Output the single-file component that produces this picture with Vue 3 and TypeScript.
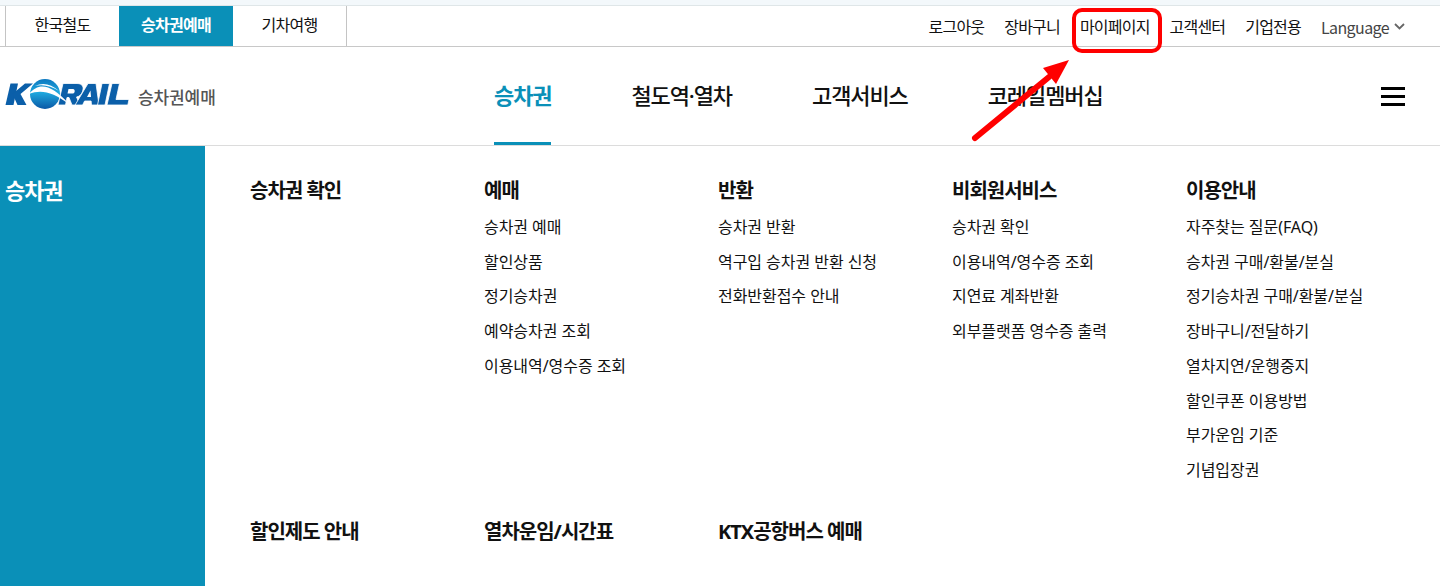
<script setup lang="ts">
// Site header with the open ticket menu
interface MenuColumn {
  title: string
  links: string[]
}

const topTabs = ['한국철도', '승차권예매', '기차여행']
const utilLinks = ['로그아웃', '장바구니', '마이페이지', '고객센터', '기업전용']
const mainNav = ['승차권', '철도역·열차', '고객서비스', '코레일멤버십']

const columns: MenuColumn[] = [
  { title: '승차권 확인', links: [] },
  { title: '예매', links: ['승차권 예매', '할인상품', '정기승차권', '예약승차권 조회', '이용내역/영수증 조회'] },
  { title: '반환', links: ['승차권 반환', '역구입 승차권 반환 신청', '전화반환접수 안내'] },
  { title: '비회원서비스', links: ['승차권 확인', '이용내역/영수증 조회', '지연료 계좌반환', '외부플랫폼 영수증 출력'] },
  {
    title: '이용안내',
    links: ['자주찾는 질문(FAQ)', '승차권 구매/환불/분실', '정기승차권 구매/환불/분실', '장바구니/전달하기', '열차지연/운행중지', '할인쿠폰 이용방법', '부가운임 기준', '기념입장권']
  },
  { title: '할인제도 안내', links: [] },
  { title: '열차운임/시간표', links: [] },
  { title: 'KTX공항버스 예매', links: [] }
]
</script>

<template>
  <div class="page">
    <div class="top-strip"></div>
    <div class="top-bar">
      <ul class="tabs">
        <li v-for="(tab, i) in topTabs" :key="tab" class="tab" :class="{ active: i === 1 }">{{ tab }}</li>
      </ul>
      <ul class="util">
        <li v-for="link in utilLinks" :key="link">{{ link }}</li>
        <li class="lang">
          Language
          <svg width="11" height="7" viewBox="0 0 11 7"><path d="M1 1l4.500 4.500L10 1" fill="none" stroke="#666" stroke-width="1.8" /></svg>
        </li>
      </ul>
    </div>

    <header class="header">
      <div class="logo">
        <svg class="logo-mark" width="125" height="32" viewBox="0 0 125 32">
          <defs>
            <linearGradient id="ball" x1="0" y1="0" x2="0" y2="1">
              <stop offset="0" stop-color="#0c78c0" />
              <stop offset="0.45" stop-color="#1ea8de" />
              <stop offset="1" stop-color="#0a58a6" />
            </linearGradient>
          </defs>
          <path d="M5.500 4.500h7.500l-4.500 21.500H0.500z" fill="#0b5fa9" />
          <path d="M20 4.500h8L15.500 15l6 11h-9l-5-11z" fill="#0b5fa9" />
          <circle cx="40" cy="15" r="15" fill="url(#ball)" />
          <g fill="#0b5fa9" stroke="#fff" stroke-width="0.8">
            <path d="M58 4.500h14c6 0 7 4 5.500 8-1 3-3 5-6 5.500l3.500 8h-8l-3-7.500h-2l-1.500 7.500H53z" />
            <path d="M83 4.500h8l3 21.500h-7.500l-.4-4h-6.500l-2 4h-7.500z" />
            <path d="M97 4.500h7.500L100 26h-7.500z" />
            <path d="M107 4.500h7.500L111 20.500h13l-1.200 5.500H102z" />
          </g>
          <path d="M63.500 10l-1 4.500H68c2 0 2.500-4.500 0-4.500z" fill="#fff" />
          <path d="M85.500 11.500L82 18h4z" fill="#fff" />
          <!-- swoosh across the ball -->
          <path d="M24 15C34 3 46 5 64 25 48 13 36 10 24 15z" fill="#fff" />
          <path d="M30 7C38 3 46 5 54 12 46 7 38 5 30 7z" fill="#fff" />
        </svg>
        <span class="logo-text">승차권예매</span>
      </div>
      <nav class="main-nav">
        <a v-for="(item, i) in mainNav" :key="item" class="nav-item" :class="{ active: i === 0 }">{{ item }}</a>
      </nav>
      <div class="burger"><i></i><i></i><i></i></div>
    </header>

    <section class="menu">
      <aside class="side">승차권</aside>
      <div class="menu-grid">
        <div v-for="col in columns" :key="col.title" class="col">
          <h3>{{ col.title }}</h3>
          <ul>
            <li v-for="link in col.links" :key="link">{{ link }}</li>
          </ul>
        </div>
      </div>
    </section>

    <!-- annotation drawn over the screenshot -->
    <div class="mark-box"></div>
    <svg class="mark-arrow" width="110" height="110" viewBox="0 0 110 110">
      <path d="M15 96L89 35" stroke="#f00" stroke-width="6" stroke-linecap="round" />
      <path d="M109 18L83 26 96 42z" fill="#f00" />
    </svg>
  </div>
</template>

<style>
html,
body {
  margin: 0;
  background: #fff;
}
</style>

<style scoped>
.page {
  position: relative;
  width: 1440px;
  height: 586px;
  overflow: hidden;
  font-family: "Noto Sans", "Noto Sans CJK KR", sans-serif;
  color: #111;
}

ul {
  list-style: none;
  margin: 0;
  padding: 0;
}

.top-strip {
  height: 5px;
  background: #f3f8fb;
  border-bottom: 1px solid #dfe6e8;
}

.top-bar {
  height: 40px;
  display: flex;
  justify-content: space-between;
  border-bottom: 1px solid #c8c8c8;
}

.tabs {
  display: flex;
  margin-left: 5px;
  border-left: 1px solid #c4c4c4;
  border-right: 1px solid #c4c4c4;
}

.tab {
  width: 113px;
  text-align: center;
  font-size: 16px;
  letter-spacing: -0.7px;
  line-height: 39px;
}

.tab.active {
  width: 114px;
  background: #0a90b8;
  color: #fff;
  font-weight: 700;
}

.util {
  display: flex;
  gap: 20px;
  padding-right: 35px;
  font-size: 16px;
  letter-spacing: -0.8px;
  line-height: 42px;
}

.lang {
  display: flex;
  align-items: center;
  gap: 5px;
  height: 41px;
  color: #444;
  font-family: "Noto Sans CJK KR", sans-serif;
  font-size: 16px;
  letter-spacing: -0.6px;
}

.header {
  position: relative;
  height: 98px;
  display: flex;
  border-bottom: 1px solid #dcdcdc;
}

.logo {
  display: flex;
  align-items: center;
  gap: 8px;
  padding-left: 5px;
  width: 494px;
  box-sizing: border-box;
}

.logo-mark {
  margin-top: -2px;
}

.logo-text {
  color: #555;
  font-size: 17px;
  font-weight: 500;
  letter-spacing: -0.1px;
}

.main-nav {
  display: flex;
  gap: 80px;
}

.nav-item {
  font-size: 22px;
  font-weight: 500;
  letter-spacing: -1.1px;
  line-height: 97px;
  height: 98px;
  box-sizing: border-box;
}

.nav-item.active {
  color: #0a90b8;
  font-weight: 700;
  border-bottom: 3px solid #0a90b8;
}

.burger {
  position: absolute;
  right: 35px;
  top: 40px;
  width: 24px;
  display: flex;
  flex-direction: column;
  gap: 5px;
}

.burger i {
  display: block;
  height: 3px;
  background: #000;
}

.menu {
  display: flex;
  height: 440px;
}

.side {
  width: 205px;
  background: #0a90b8;
  color: #fff;
  font-size: 22px;
  font-weight: 700;
  letter-spacing: -1.1px;
  padding: 27px 0 0 5px;
  box-sizing: border-box;
}

.menu-grid {
  flex: 1;
  display: grid;
  grid-template-columns: repeat(5, 234px);
  grid-template-rows: 341px auto;
  padding: 30px 0 0 45px;
}

.col h3 {
  margin: 0 0 4px;
  font-size: 20px;
  font-weight: 700;
  letter-spacing: -1px;
  line-height: 30px;
}

.col li {
  font-size: 16px;
  letter-spacing: -0.05px;
  line-height: 34.7px;
}

.mark-box {
  position: absolute;
  left: 1072px;
  top: 8px;
  width: 82px;
  height: 37px;
  border: 4px solid #f00;
  border-radius: 10px;
}

.mark-arrow {
  position: absolute;
  left: 960px;
  top: 42px;
}
</style>
